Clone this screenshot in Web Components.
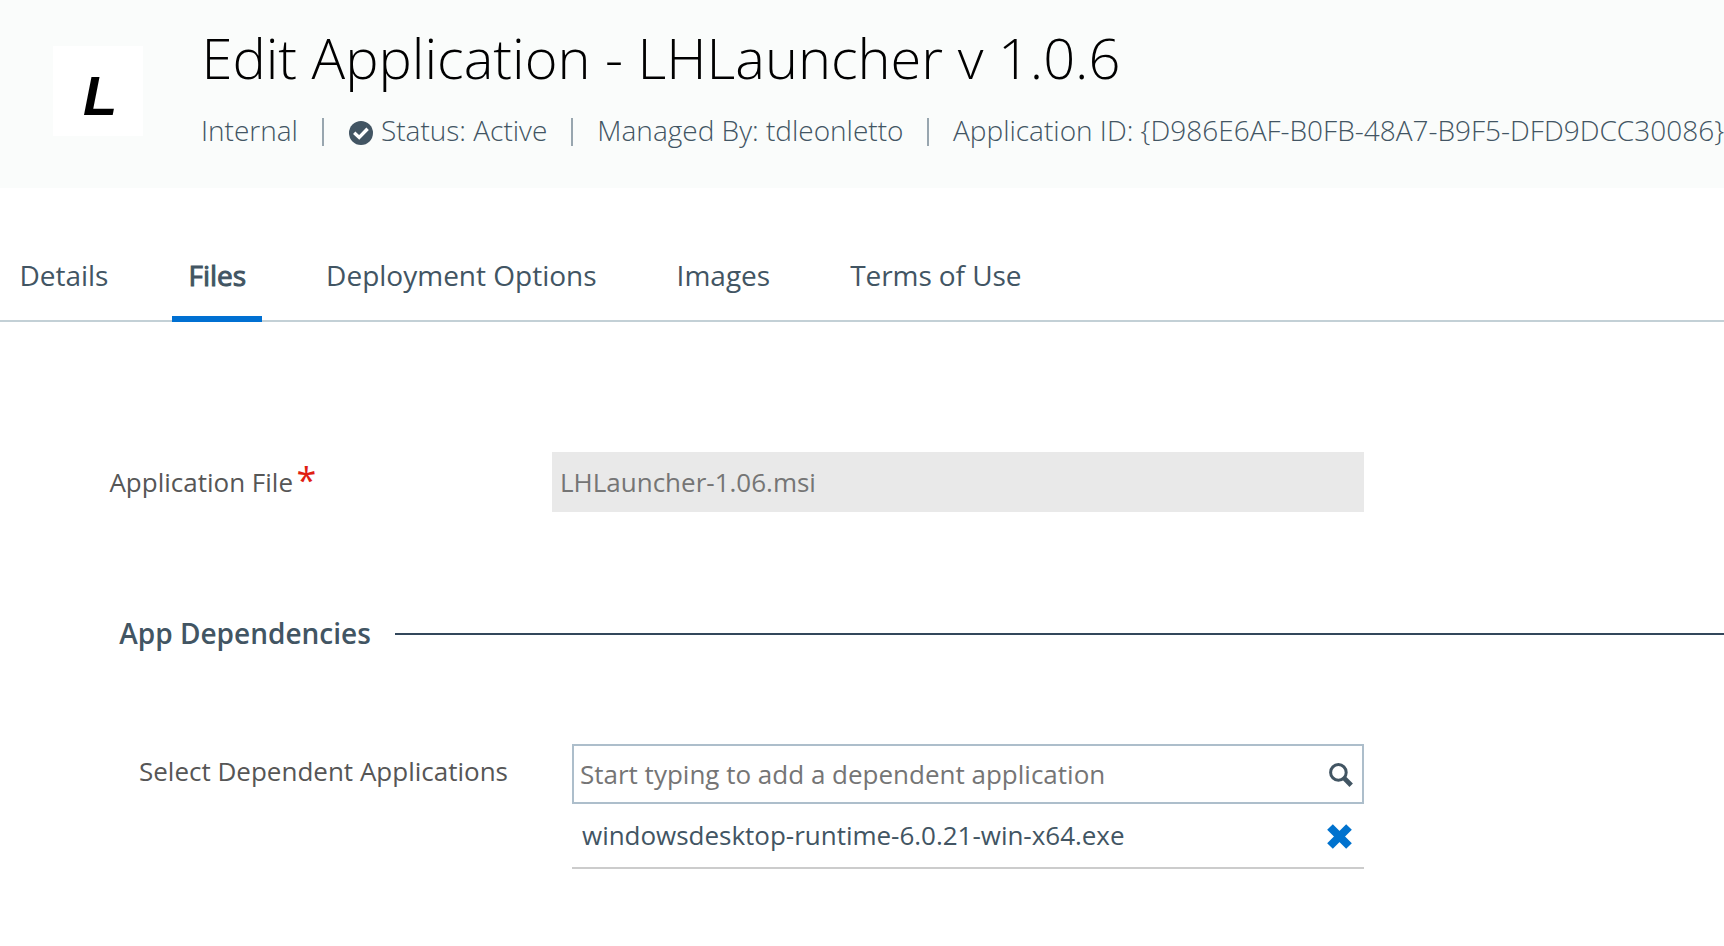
<!DOCTYPE html>
<html lang="en">
<head>
<meta charset="utf-8">
<title>Edit Application</title>
<style>
html,body{margin:0;padding:0;background:#fff}
body{width:1724px;height:946px;overflow:hidden;font-family:"Open Sans",sans-serif;font-size:26px;color:#425563}
</style>
</head>
<body>
<app-editor></app-editor>
<script>
const define = (name, html) => customElements.define(name, class extends HTMLElement {
  constructor() {
    super();
    const t = document.createElement('template');
    t.innerHTML = html;
    this.attachShadow({ mode: 'open' }).appendChild(t.content.cloneNode(true));
  }
});

define('app-logo', `<style>
:host{display:flex;flex:none;width:90px;height:90px;background:#fff;align-items:center;justify-content:center}
span{font:italic 700 56px/60px "Liberation Sans",Arial,sans-serif;color:#000;height:60px;margin:10px 0 0 4px}
</style><span><slot></slot></span>`);

define('status-icon', `<style>
:host{display:block;flex:none;width:24px;height:24px}svg{display:block}
</style><svg width="24" height="24" viewBox="0 0 24 24"><circle cx="12" cy="12" r="12" fill="#425563"/><path d="M5.2 11.8l5 4.6 8.4-8.6" fill="none" stroke="#fff" stroke-width="3.4"/></svg>`);

define('meta-item', `<style>
:host{display:flex;align-items:center;height:38px;line-height:38px;white-space:pre}
:host([divided])::before{content:"";width:2px;height:28px;background:#98a6af;margin:4px 24px 0 24px}
:host(:last-child){margin-left:-.5px}
::slotted(status-icon){margin:6px 8px 0 1px}
</style><slot></slot>`);

define('app-header', `<style>
:host{display:flex;height:187.5px;background:#fafcfb;box-sizing:border-box;padding:46px 0 0 53px}
.text{margin:-27px 0 0 58px;white-space:nowrap}
h1{margin:0 0 0 .5px;font-weight:300;font-size:56px;line-height:76px;color:#000;letter-spacing:-.02px}
.meta{display:flex;margin-top:16px;font-size:28px;font-weight:300}
</style><slot name="logo"></slot><div class="text"><h1><slot name="title"></slot></h1><div class="meta"><slot></slot></div></div>`);

define('tab-item', `<style>
:host{display:block;box-sizing:border-box;height:90px;padding:24px 16px 0;margin-right:48px;line-height:38px;white-space:nowrap}
:host([active]){border-bottom:6px solid #0070d2;-webkit-text-stroke:1px #425563}
:host(:last-child){letter-spacing:-.08px}
</style><slot></slot>`);

define('tab-bar', `<style>
:host{display:flex;height:90px;margin-top:44.5px;padding-left:3.4px;font-size:28px;
background:linear-gradient(#c3d0d6,#c3d0d6) bottom/100% 2px no-repeat}
</style><slot></slot>`);

define('form-row', `<style>
:host{display:flex}
.label{box-sizing:border-box;flex:none;width:var(--field-x);padding:var(--label-pad);line-height:36px;color:#565656;white-space:nowrap;display:flex}
</style><div class="label"><slot name="label"></slot></div><slot></slot>`);

define('required-mark', `<style>
:host{display:block;color:#e01e13;font-size:36px;line-height:36px;margin:-2px 0 0 3.5px;height:36px}
</style>*`);

define('text-field', `<style>
:host{display:flex;box-sizing:border-box;height:60px;line-height:36px;align-items:center;color:#757575;white-space:nowrap;justify-content:space-between}
:host([disabled]){width:812px;background:#e9e9e9;padding-left:8px}
:host([search]){width:792px;border:2px solid #adbecb;padding:0 9px 0 6px}
svg{display:none}:host([search]) svg{display:block;margin-top:2px}
</style><span><slot></slot></span><svg width="24" height="24" viewBox="0 0 24 24" fill="none" stroke="#425563"><circle cx="9.4" cy="9.4" r="7.8" stroke-width="3"/><path d="M14.4 14.4l7.8 7.8" stroke-width="4.8"/></svg>`);

define('selected-app', `<style>
:host{display:flex;box-sizing:border-box;width:792px;height:65px;border-bottom:2px solid #ccc;padding:13px 12px 0 10px;line-height:36px;justify-content:space-between;white-space:nowrap;letter-spacing:-.02px}
svg{display:block;margin-top:7px}
</style><span><slot></slot></span><svg width="25" height="25" viewBox="0 0 25 25"><path d="M3 3l19 19M22 3L3 22" stroke="#0072ce" stroke-width="8"/></svg>`);

define('section-heading', `<style>
:host{display:flex;align-items:center;height:38px;margin-top:102px;padding-left:119.3px;line-height:38px;font-size:28px;font-weight:600;white-space:nowrap}
:host::after{content:"";flex:1;height:2px;background:#33475b;margin:2px 0 0 24.7px}
</style><slot></slot>`);

define('app-editor', `<style>
:host{display:block}
.file{margin-top:130px;--field-x:552px;--label-pad:12px 0 0 109.4px}
.deps{margin-top:92px;--field-x:572px;--label-pad:9px 0 0 139px}
</style>
<app-header><app-logo slot="logo">L</app-logo><span slot="title">Edit Application - LHLauncher v 1.0.6</span>
<meta-item>Internal</meta-item><meta-item divided><status-icon></status-icon>Status: Active</meta-item><meta-item divided>Managed By: tdleonletto</meta-item><meta-item divided>Application ID: {D986E6AF-B0FB-48A7-B9F5-DFD9DCC30086}</meta-item></app-header>
<tab-bar><tab-item>Details</tab-item><tab-item active>Files</tab-item><tab-item>Deployment Options</tab-item><tab-item>Images</tab-item><tab-item>Terms of Use</tab-item></tab-bar>
<form-row class="file"><span slot="label">Application File</span><required-mark slot="label"></required-mark><text-field disabled>LHLauncher-1.06.msi</text-field></form-row>
<section-heading>App Dependencies</section-heading>
<form-row class="deps"><span slot="label">Select Dependent Applications</span><div><text-field search>Start typing to add a dependent application</text-field><selected-app>windowsdesktop-runtime-6.0.21-win-x64.exe</selected-app></div></form-row>`);
</script>
</body>
</html>
